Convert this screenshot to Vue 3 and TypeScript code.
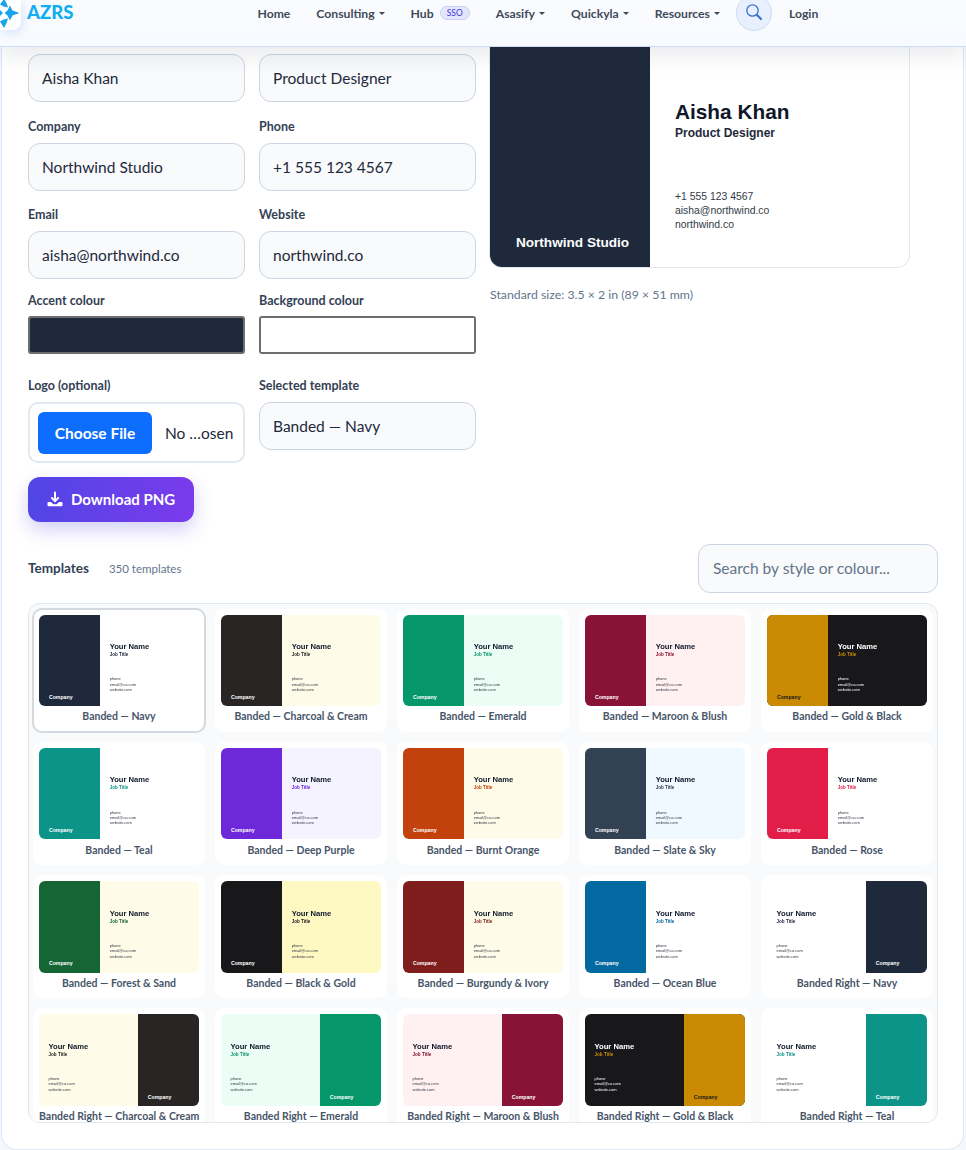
<template>
  <div class="page">
    <header class="navbar">
      <a class="brand">
        <span class="brand-tile">
          <svg viewBox="0 0 21 30" width="21" height="30" fill="#1aa3ec">
            <path d="M10 5.500 L12.500 10.500 L19.500 13 L12.500 15.500 L10 20.500 L7.500 15.500 L4.500 13 L7.500 10.500 Z" />
            <path d="M4 -1 L6.500 3 L8 7.500 L3.500 6.500 L0 4.500 Z" />
            <path d="M3.500 19.500 L8 18.500 L6.500 23 L4 28 L0 21.500 Z" />
            <path d="M0 10 L3 13 L0 16 Z" />
          </svg>
        </span>
        <span class="brand-name">AZRS</span>
      </a>
      <nav class="menu">
        <a v-for="item in navItems" :key="item.label" class="menu-link">
          {{ item.label }}<span v-if="item.caret" class="caret"></span>
          <span v-if="item.badge" class="badge">{{ item.badge }}</span>
        </a>
        <button class="search-btn" aria-label="Search">
          <svg viewBox="0 0 36 36" width="36" height="36" fill="none" stroke="#3a70d8">
            <circle cx="16.500" cy="15.500" r="5.700" stroke-width="1.300" />
            <path d="M20.800 19.800 L25 24" stroke-width="2.200" stroke-linecap="round" />
          </svg>
        </button>
        <a class="menu-link login">Login</a>
      </nav>
    </header>

    <main class="sheet">
      <section class="hero">
        <form class="form-grid" @submit.prevent>
          <div v-for="f in textFields" :key="f.label" class="field">
            <label class="field-label">{{ f.label }}</label>
            <input class="text-input" type="text" :value="f.value" />
          </div>
          <div class="field colour-field">
            <label class="field-label">Accent colour</label>
            <input class="swatch" type="color" value="#1e293b" />
          </div>
          <div class="field colour-field">
            <label class="field-label">Background colour</label>
            <input class="swatch" type="color" value="#ffffff" />
          </div>
          <div class="field">
            <label class="field-label">Logo (optional)</label>
            <input class="file-input" type="file" />
          </div>
          <div class="field">
            <label class="field-label">Selected template</label>
            <input class="text-input" type="text" value="Banded — Navy" readonly />
          </div>
        </form>
        <div class="preview">
          <div class="biz large">
            <div class="biz-band" style="background: #1e293b">
              <span class="biz-company" style="color: #ffffff">Northwind Studio</span>
            </div>
            <div class="biz-info">
              <div class="biz-name" style="color: #0f172a">Aisha Khan</div>
              <div class="biz-title" style="color: #1e293b">Product Designer</div>
              <div class="biz-contact" style="color: #333a45">
                <div>+1 555 123 4567</div>
                <div>aisha@northwind.co</div>
                <div>northwind.co</div>
              </div>
            </div>
          </div>
          <p class="size-note">Standard size: 3.5 × 2 in (89 × 51 mm)</p>
        </div>
      </section>

      <button class="download-btn">
        <svg viewBox="0 0 16 16" width="16" height="16" fill="#fff">
          <path d="M8 0.500a1 1 0 0 1 1 1v6.200l2-2 1.400 1.400L8 11.500 3.600 7.100 5 5.700l2 2V1.500a1 1 0 0 1 1-1z" />
          <path d="M0.500 12c0-.6.400-1 1-1h2.300L6.500 13.300h3L12.200 11h2.300c.6 0 1 .4 1 1v2.300a1 1 0 0 1-1 1h-13a1 1 0 0 1-1-1z" />
        </svg>
        Download PNG
      </button>

      <div class="templates-head">
        <strong class="templates-title">Templates</strong>
        <span class="templates-count">350 templates</span>
        <input class="search-input" type="text" placeholder="Search by style or colour..." />
      </div>

      <div class="template-grid">
        <div
          v-for="(t, i) in templates"
          :key="t.name"
          class="template-card"
          :class="{ selected: i === 0 }"
        >
          <div class="biz small" :class="{ flipped: t.right }" :style="{ background: t.bg }">
            <div class="biz-band" :style="{ background: t.band }">
              <span class="biz-company" :style="{ color: t.company || '#ffffff' }">Company</span>
            </div>
            <div class="biz-info">
              <div class="biz-name" :style="{ color: t.text || '#0f172a' }">Your Name</div>
              <div class="biz-title" :style="{ color: t.title }">Job Title</div>
              <div class="biz-contact" :style="{ color: t.text || '#333a45' }">
                <div>phone</div>
                <div>email@co.com</div>
                <div>website.com</div>
              </div>
            </div>
          </div>
          <div class="template-name">{{ t.name }}</div>
        </div>
      </div>
    </main>
  </div>
</template>

<script setup lang="ts">
interface NavItem {
  label: string
  caret?: boolean
  badge?: string
}

interface Template {
  name: string
  band: string
  bg: string
  title: string
  text?: string
  company?: string
  right?: boolean
}

const navItems: NavItem[] = [
  { label: 'Home' },
  { label: 'Consulting', caret: true },
  { label: 'Hub', badge: 'SSO' },
  { label: 'Asasify', caret: true },
  { label: 'Quickyla', caret: true },
  { label: 'Resources', caret: true },
]

const textFields = [
  { label: 'Full name', value: 'Aisha Khan' },
  { label: 'Job title', value: 'Product Designer' },
  { label: 'Company', value: 'Northwind Studio' },
  { label: 'Phone', value: '+1 555 123 4567' },
  { label: 'Email', value: 'aisha@northwind.co' },
  { label: 'Website', value: 'northwind.co' },
]

const templates: Template[] = [
  { name: 'Banded — Navy', band: '#1e293b', bg: '#ffffff', title: '#1e293b' },
  { name: 'Banded — Charcoal & Cream', band: '#292524', bg: '#fefce8', title: '#292524' },
  { name: 'Banded — Emerald', band: '#059669', bg: '#ecfdf5', title: '#059669' },
  { name: 'Banded — Maroon & Blush', band: '#881337', bg: '#fff1f2', title: '#881337' },
  { name: 'Banded — Gold & Black', band: '#ca8a04', bg: '#18181b', title: '#ca8a04', text: '#ffffff', company: '#18181b' },
  { name: 'Banded — Teal', band: '#0d9488', bg: '#ffffff', title: '#0d9488' },
  { name: 'Banded — Deep Purple', band: '#6d28d9', bg: '#f5f3ff', title: '#6d28d9' },
  { name: 'Banded — Burnt Orange', band: '#c2410c', bg: '#fefce8', title: '#c2410c' },
  { name: 'Banded — Slate & Sky', band: '#334155', bg: '#f0f9ff', title: '#334155' },
  { name: 'Banded — Rose', band: '#e11d48', bg: '#ffffff', title: '#e11d48' },
  { name: 'Banded — Forest & Sand', band: '#166534', bg: '#fefce8', title: '#166534' },
  { name: 'Banded — Black & Gold', band: '#18181b', bg: '#fef9c3', title: '#18181b' },
  { name: 'Banded — Burgundy & Ivory', band: '#7f1d1d', bg: '#fefce8', title: '#7f1d1d' },
  { name: 'Banded — Ocean Blue', band: '#0369a1', bg: '#ffffff', title: '#0369a1' },
  { name: 'Banded Right — Navy', band: '#1e293b', bg: '#ffffff', title: '#1e293b', right: true },
  { name: 'Banded Right — Charcoal & Cream', band: '#292524', bg: '#fefce8', title: '#292524', right: true },
  { name: 'Banded Right — Emerald', band: '#059669', bg: '#ecfdf5', title: '#059669', right: true },
  { name: 'Banded Right — Maroon & Blush', band: '#881337', bg: '#fff1f2', title: '#881337', right: true },
  { name: 'Banded Right — Gold & Black', band: '#ca8a04', bg: '#18181b', title: '#ca8a04', text: '#ffffff', company: '#18181b', right: true },
  { name: 'Banded Right — Teal', band: '#0d9488', bg: '#ffffff', title: '#0d9488', right: true },
]
</script>

<style>
body {
  background: #f4f7fb;
}
</style>

<style scoped>
.page {
  position: relative;
  width: 966px;
  height: 1150px;
  overflow: hidden;
  font-family: Lato, 'Open Sans', sans-serif;
  color: #0f172a;
}

.navbar {
  position: absolute;
  z-index: 5;
  top: 0;
  left: 0;
  right: 0;
  height: 47px;
  box-sizing: border-box;
  display: flex;
  align-items: flex-start;
  background: linear-gradient(180deg, #fafbfe, #f7faff);
  border-bottom: 1px solid #cfdcf6;
  box-shadow: 0 8px 24px rgba(30, 41, 59, 0.1);
}
.brand {
  display: flex;
}
.brand-tile {
  display: block;
  width: 21px;
  height: 30px;
  overflow: hidden;
  background: #fff;
  border-radius: 0 0 8px 0;
  box-shadow: 2px 3px 9px rgba(37, 99, 235, 0.14);
}
.brand-tile svg {
  display: block;
}
.brand-name {
  margin-left: 6px;
  font-size: 18.5px;
  line-height: 25px;
  font-weight: 900;
  color: #12aef2;
}
.menu {
  display: flex;
  align-items: center;
  height: 26px;
  margin-left: 184px;
  gap: 26px;
  font-size: 12.2px;
  font-weight: 700;
  color: #3f4a5a;
}
.menu-link {
  display: inline-flex;
  align-items: center;
  white-space: nowrap;
}
.caret {
  width: 0;
  height: 0;
  margin-left: 4px;
  border-top: 3px solid currentColor;
  border-left: 3px solid transparent;
  border-right: 3px solid transparent;
}
.badge {
  margin-left: 6px;
  padding: 0 6px;
  font-size: 8.5px;
  line-height: 12px;
  font-weight: 500;
  color: #4f46e5;
  background: #e4e7fb;
  border: 1px solid #c9cff5;
  border-radius: 8px;
}
.search-btn {
  display: block;
  flex: none;
  box-sizing: border-box;
  width: 36px;
  height: 36px;
  margin-left: -10px;
  padding: 0;
  background: #e8f0fd;
  border: 1px solid #c9dbf7;
  border-radius: 50%;
}
.search-btn svg {
  display: block;
  margin: -1px;
}
.login {
  margin-left: -9px;
}

.sheet {
  box-sizing: border-box;
  width: 963px;
  height: 1150px;
  margin-left: 1px;
  padding: 27px 25px 0 26px;
  background: #fff;
  border: 1px solid #e3e9f3;
  border-left-color: #dbe7f8;
  border-radius: 0 0 16px 16px;
}

.hero {
  display: grid;
  grid-template-columns: 1fr 1fr;
  column-gap: 14px;
}
.form-grid {
  display: grid;
  grid-template-columns: 1fr 1fr;
  column-gap: 14px;
  row-gap: 12px;
  align-items: start;
}
.field {
  min-width: 0;
}
.colour-field {
  margin-top: -3px;
}
.colour-field .field-label {
  margin-bottom: 6px;
}
.field-label {
  display: block;
  margin-bottom: 7px;
  font-size: 12.5px;
  line-height: 19px;
  font-weight: 700;
  color: #334155;
}
.text-input {
  display: block;
  box-sizing: border-box;
  width: 100%;
  height: 48px;
  margin-bottom: 2.5px;
  padding: 0 13px;
  font: inherit;
  font-size: 15.5px;
  color: #1e293b;
  background: #f8fafc;
  border: 1px solid #cbd5e1;
  border-radius: 12px;
  outline: none;
}
.swatch {
  display: block;
  box-sizing: border-box;
  width: 100%;
  height: 38px;
  margin-bottom: 10px;
  padding: 0;
  background: #fff;
  border: 2px solid #6e6e6e;
  border-radius: 3px;
}
.swatch::-webkit-color-swatch-wrapper {
  padding: 0;
}
.swatch::-webkit-color-swatch {
  border: none;
  border-radius: 0;
}
.file-input {
  display: block;
  box-sizing: border-box;
  width: 100%;
  height: 61px;
  padding: 8px;
  font: inherit;
  font-size: 15.5px;
  color: #1e293b;
  background: #fff;
  border: 2px solid #e2e8f0;
  border-radius: 10px;
}
.file-input::file-selector-button {
  width: 114px;
  height: 42px;
  margin-right: 13px;
  font: inherit;
  font-weight: 700;
  color: #fff;
  background: #0d6efd;
  border: none;
  border-radius: 6px;
}

.preview {
  min-width: 0;
}
.size-note {
  margin: 20px 0 0;
  font-size: 12.3px;
  line-height: 16px;
  color: #64748b;
}

.biz {
  box-sizing: border-box;
  display: flex;
  aspect-ratio: 3.5 / 2;
  overflow: hidden;
  font-family: 'Liberation Sans', Arial, sans-serif;
}
.biz.large {
  width: 419px;
  font-size: 16px;
  background: #fff;
  border-radius: 12px;
  box-shadow: 0 0 0 1px #e2e8f0;
}
.biz.small {
  width: 160px;
  font-size: 6.11px;
  border-radius: 6px;
}
.biz.flipped {
  flex-direction: row-reverse;
}
.biz-band {
  flex: 0 0 38.2%;
  display: flex;
  align-items: flex-end;
  box-sizing: border-box;
  padding: 0 0 1em 1.62em;
}
.biz-company {
  font-size: 0.85em;
  line-height: 1.2;
  font-weight: 700;
  white-space: nowrap;
}
.biz-info {
  flex: 1;
  min-width: 0;
  padding: 4.5em 0 0 1.56em;
  white-space: nowrap;
}
.biz-name {
  font-size: 1.3em;
  line-height: 1.2;
  font-weight: 700;
}
.biz.small .biz-name {
  font-size: 1.25em;
  line-height: 1.25;
}
.biz.small .biz-info {
  filter: blur(0.2px);
}
.biz-title {
  margin-top: 0.1em;
  font-size: 0.75em;
  line-height: 1.3;
  font-weight: 700;
}
.biz-contact {
  margin-top: 4.6em;
  font-size: 0.65em;
  line-height: 1.35;
}

.download-btn {
  display: flex;
  align-items: center;
  gap: 8px;
  box-sizing: border-box;
  width: 166px;
  height: 45px;
  margin-top: 14px;
  padding: 0 0 0 19px;
  font: inherit;
  font-size: 15px;
  font-weight: 700;
  color: #fff;
  background: linear-gradient(100deg, #4f46e5, #7c3aed);
  border: none;
  border-radius: 12px;
  box-shadow: 0 8px 18px rgba(79, 70, 229, 0.25);
}

.templates-head {
  display: flex;
  align-items: center;
  margin-top: 22px;
}
.templates-title {
  font-size: 13.5px;
  font-weight: 700;
  color: #334155;
}
.templates-count {
  margin-left: 20px;
  font-size: 11.5px;
  color: #64748b;
}
.search-input {
  box-sizing: border-box;
  width: 240px;
  height: 49px;
  margin-left: auto;
  padding: 0 14px;
  font: inherit;
  font-size: 15.5px;
  background: #f8fafc;
  border: 1px solid #cbd5e1;
  border-radius: 12px;
  outline: none;
}
.search-input::placeholder {
  color: #64748b;
}

.template-grid {
  box-sizing: border-box;
  display: grid;
  grid-template-columns: repeat(5, 174px);
  align-content: start;
  gap: 8px;
  height: 520px;
  margin-top: 10px;
  padding: 4px 3px 0;
  overflow: hidden;
  background: #f8fafc;
  border: 1px solid #e2e8f0;
  border-radius: 12px;
}
.template-card {
  box-sizing: border-box;
  padding: 6px 6px 7.4px;
  background: #fff;
  border: 1px solid #f8fafc;
  border-radius: 10px;
}
.template-card.selected {
  border: 2px solid #d4d8df;
  padding: 5px 5px 6.4px;
}
.template-name {
  margin-top: 3.5px;
  font-size: 10.5px;
  line-height: 15px;
  font-weight: 700;
  text-align: center;
  white-space: nowrap;
  color: #475569;
}
</style>
